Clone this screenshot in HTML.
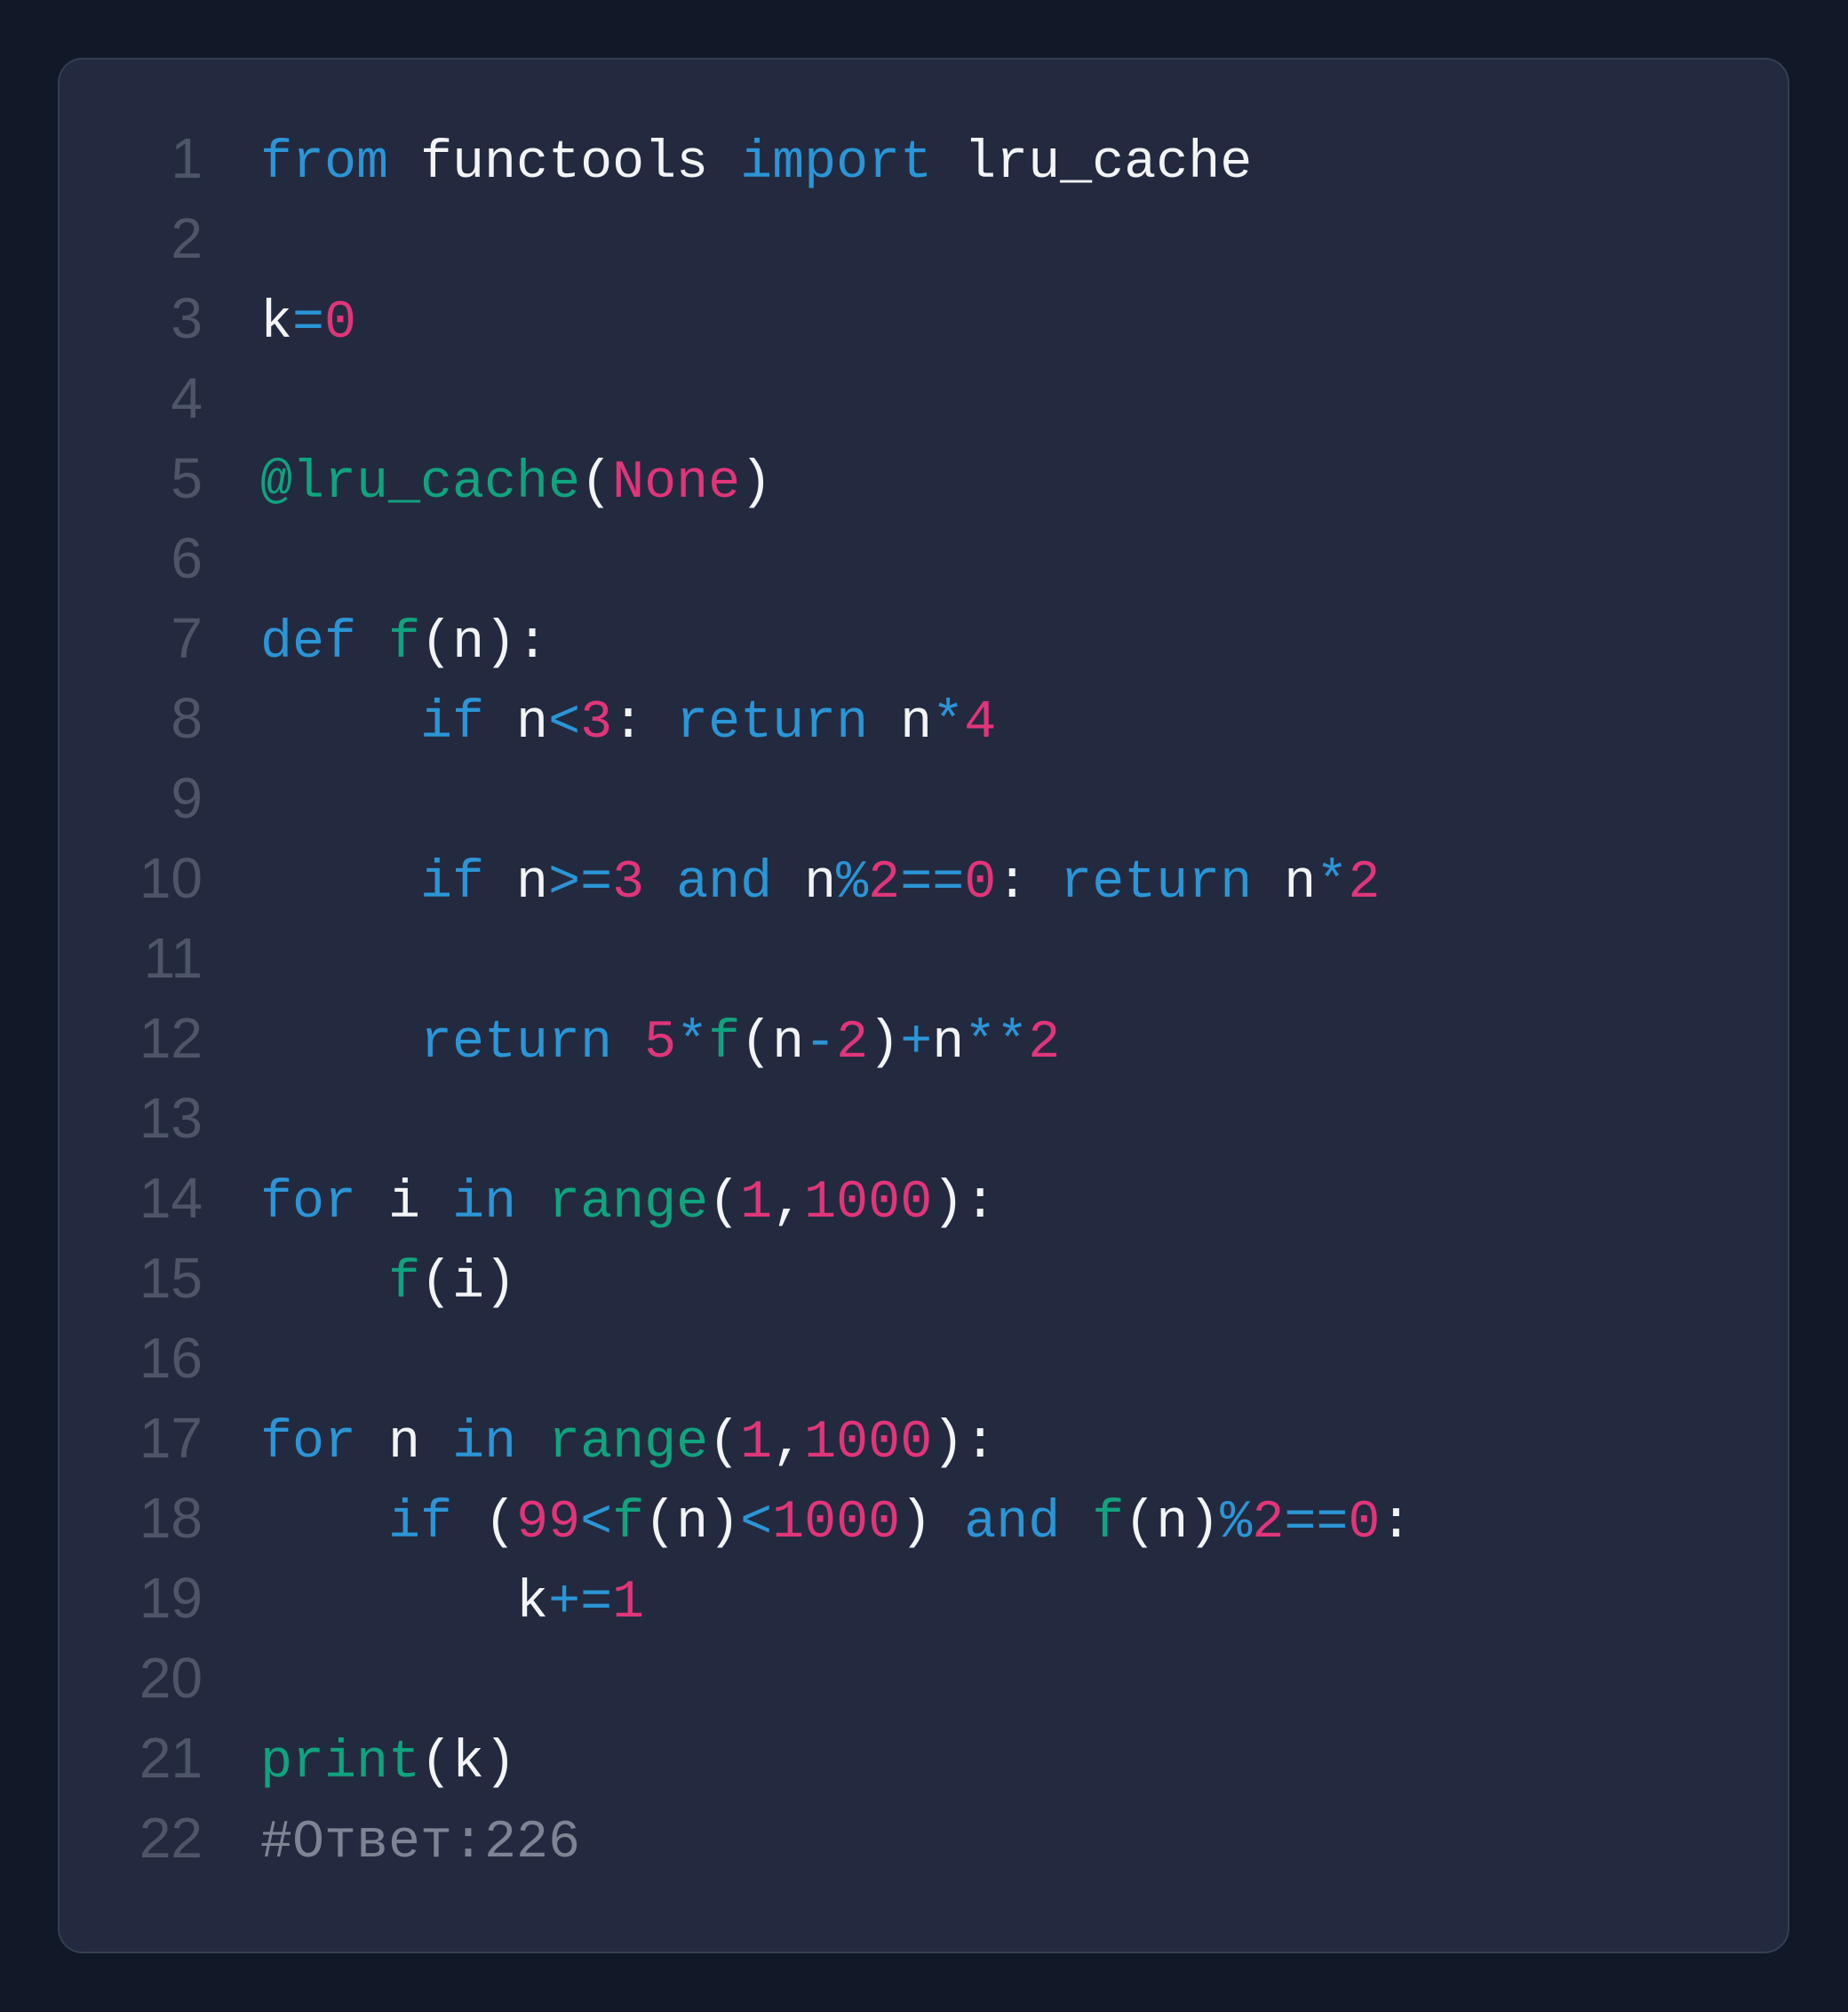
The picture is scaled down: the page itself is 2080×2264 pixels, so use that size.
<!DOCTYPE html>
<html><head><meta charset="utf-8"><style>
html,body{margin:0;padding:0;background:#111827;width:2080px;height:2264px;overflow:hidden}
.card{position:absolute;left:65px;top:65px;width:1945px;height:2129px;background:#232a3f;border:2px solid #363e52;border-radius:28px}
.ln{position:absolute;left:0;top:133px;width:228px;text-align:right;font:64px/90px "Liberation Sans",sans-serif;color:#4f5568;white-space:pre;margin:0}
.code{position:absolute;left:293px;top:139px;font:60px/90px "Liberation Mono","DejaVu Sans Mono",monospace;color:#f3f4f6;white-space:pre;margin:0}
.b{color:#2b95d6}.g{color:#10a37f}.p{color:#e0357a}.c{color:#7d8494}
</style></head><body>
<div class="card"></div>
<pre class="ln">1
2
3
4
5
6
7
8
9
10
11
12
13
14
15
16
17
18
19
20
21
22</pre>
<pre class="code"><span class="b">from</span> functools <span class="b">import</span> lru_cache

k<span class="b">=</span><span class="p">0</span>

<span class="g">@lru_cache</span>(<span class="p">None</span>)

<span class="b">def</span> <span class="g">f</span>(n):
     <span class="b">if</span> n<span class="b">&lt;</span><span class="p">3</span>: <span class="b">return</span> n<span class="b">*</span><span class="p">4</span>

     <span class="b">if</span> n<span class="b">&gt;=</span><span class="p">3</span> <span class="b">and</span> n<span class="b">%</span><span class="p">2</span><span class="b">==</span><span class="p">0</span>: <span class="b">return</span> n<span class="b">*</span><span class="p">2</span>

     <span class="b">return</span> <span class="p">5</span><span class="b">*</span><span class="g">f</span>(n<span class="b">-</span><span class="p">2</span>)<span class="b">+</span>n<span class="b">**</span><span class="p">2</span>

<span class="b">for</span> i <span class="b">in</span> <span class="g">range</span>(<span class="p">1</span>,<span class="p">1000</span>):
    <span class="g">f</span>(i)

<span class="b">for</span> n <span class="b">in</span> <span class="g">range</span>(<span class="p">1</span>,<span class="p">1000</span>):
    <span class="b">if</span> (<span class="p">99</span><span class="b">&lt;</span><span class="g">f</span>(n)<span class="b">&lt;</span><span class="p">1000</span>) <span class="b">and</span> <span class="g">f</span>(n)<span class="b">%</span><span class="p">2</span><span class="b">==</span><span class="p">0</span>:
        k<span class="b">+=</span><span class="p">1</span>

<span class="g">print</span>(k)
<span class="c">#Ответ:226</span></pre>
</body></html>
